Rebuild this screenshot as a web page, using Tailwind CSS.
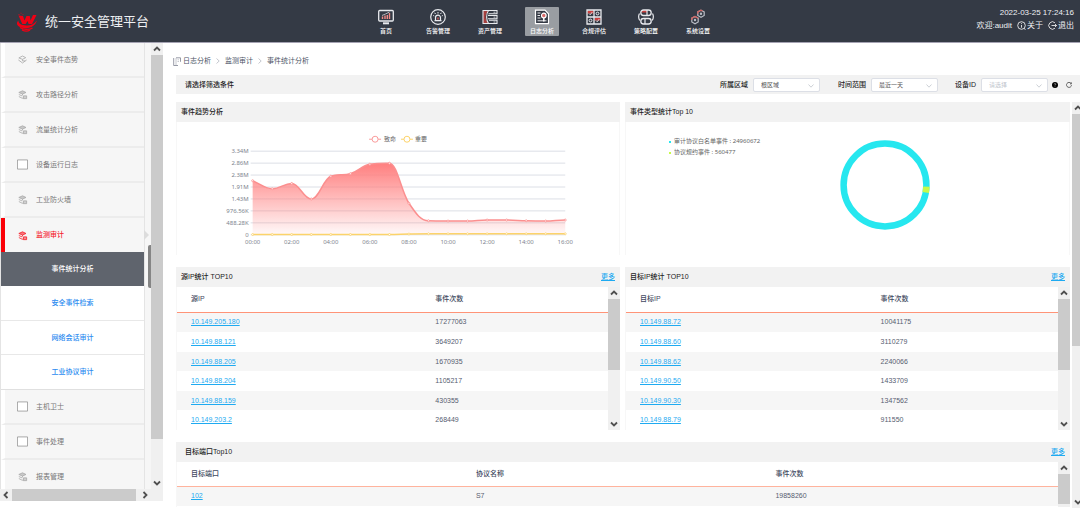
<!DOCTYPE html>
<html lang="zh-CN">
<head>
  <meta charset="UTF-8">
  <meta name="viewport" content="width=device-width, initial-scale=1.0">
  <title>统一安全管理平台</title>
  <script src="https://cdn.jsdelivr.net/npm/@tailwindcss/browser@4"></script>
  <style>
    body { font-family: 'Liberation Sans', 'Noto Sans CJK SC', sans-serif; }
    .chart { font-family: 'Noto Sans', 'Noto Sans CJK SC', sans-serif; }
  </style>
</head>
<body class="bg-white text-[7px] leading-[10px] text-[#333]">

<!-- icon sprite -->
<svg class="hidden">
  <symbol id="up" viewBox="0 0 12 12"><path d="M3 7.5 6 4.5 9 7.5" fill="none" stroke="#505050" stroke-width="1.8"/></symbol>
  <symbol id="down" viewBox="0 0 12 12"><path d="M3 4.5 6 7.5 9 4.5" fill="none" stroke="#505050" stroke-width="1.8"/></symbol>
  <symbol id="left" viewBox="0 0 12 12"><path d="M7.5 3 4.5 6 7.5 9" fill="none" stroke="#505050" stroke-width="1.8"/></symbol>
  <symbol id="right" viewBox="0 0 12 12"><path d="M4.5 3 7.5 6 4.5 9" fill="none" stroke="#505050" stroke-width="1.8"/></symbol>
  <symbol id="chev" viewBox="0 0 8 8"><path d="M1.5 2.5 4 5.2 6.5 2.5" fill="none" stroke="#c0c4cc" stroke-width=".8"/></symbol>
  <symbol id="sep" viewBox="0 0 6 8"><path d="M1.5 1.5 4.2 4 1.5 6.5" fill="none" stroke="#b5b9c2" stroke-width=".8"/></symbol>
  <symbol id="layers" viewBox="0 0 12 12" fill="none" stroke="currentColor" stroke-width=".9">
    <path d="M2 3.800 6 2 9.800 3.800 6 5.500z" fill="currentColor" fill-opacity=".6"/>
    <path d="M2 6 5.500 7.500M2 8.200 5.500 10H7M6 5.500V7"/>
    <path d="M7 7.500h3.500v3H7z" fill="currentColor" fill-opacity=".5"/>
  </symbol>
  <symbol id="cube" viewBox="0 0 12 12" fill="none" stroke="currentColor" stroke-width=".9">
    <path d="M2 4.300 6 2.200 9.500 4 6 5.800zM1.500 6.500 6 9.800 10.500 6.500M6 5.800V7.500H9"/>
  </symbol>
  <symbol id="box" viewBox="0 0 12 12"><path d="M.5 1h11v10H.5z" fill="#fff" stroke="#8c8c8c" stroke-width=".8"/></symbol>
</svg>

<div class="flex h-screen flex-col overflow-hidden">
  <header class="grid h-[43px] shrink-0 grid-cols-[1fr_auto_1fr] border-b border-[#a5a3b3] bg-[#343a45] text-white">
    <div class="flex items-center gap-[8px] pt-[2px] pl-[16px]">
      <svg class="h-[20px] w-[21px]" viewBox="0 0 21 20" fill="#f00014">
        <path d="M2.500 3.500 7 4 8.500 8.500 10.500 4h3.300L14.500 8.500 17 3h3.500L16 12h-3.300L11.500 9 9.700 12H6.300z"/>
        <path d="M2.500 8.500C-2 13 4 17.200 12 16c5.300-.8 8.300-4.500 8.800-7.500-2 3.200-6 5.200-10.300 5C5.500 13.200 2 11.800 2.500 8.500z"/>
        <path d="M4 15.500c3 2.500 9.500 2.500 12.500.5M6 18c2.500 1.300 6 1.300 8 0" fill="none" stroke="#f00014" stroke-width="1.200"/>
        <path d="M4.500 1.200h1M6.500 2.700h1M2.500 2.500h1" stroke="#f00014" stroke-width=".8"/>
      </svg>
      <h1 class="text-[13px] leading-[20px] text-[#eef0f3]">统一安全管理平台</h1>
    </div>
    <nav class="flex gap-[18px] pt-[7px] pl-1 text-[6px] leading-[8px] font-medium">
      <a href="#" class="flex h-[29px] w-[34px] flex-col items-center gap-[2px] rounded-[1px] pt-[2px] whitespace-nowrap">
        <svg class="h-[16px] w-[16px]" viewBox="0 0 16 16" fill="none" stroke="#e8eaee">
          <rect x=".7" y="1.500" width="14.600" height="10.500" rx="1" stroke-width="1.300"/><path d="M5 14.300h6" stroke-width="2"/>
          <path d="M4.500 10V7.500M7 10V6.500M9.300 10V6M11.500 10V4" stroke="#f08a86" stroke-width="1.400"/><path d="M4 6.500 7.500 5 11.500 3" stroke-width=".7"/>
        </svg>首页</a>
      <a href="#" class="flex h-[29px] w-[34px] flex-col items-center gap-[2px] rounded-[1px] pt-[2px] whitespace-nowrap">
        <svg class="h-[16px] w-[16px]" viewBox="0 0 16 16" fill="none" stroke="#e8eaee">
          <circle cx="8" cy="8" r="7.300" stroke-width="1.200"/><path d="M5.500 11.500V8.700a2.500 2.500 0 0 1 5 0v2.800M4.500 11.700h7" stroke-width="1.200"/><path d="M8 8.500v2" stroke="#e35a58" stroke-width="1.300"/>
          <path d="M8 3v1.500M4.700 3.800l.8 1.200M11.300 3.800l-.8 1.200M3.200 6.500l1 .5M12.800 6.500l-1 .5"/>
        </svg>告警管理</a>
      <a href="#" class="flex h-[29px] w-[34px] flex-col items-center gap-[2px] rounded-[1px] pt-[2px] whitespace-nowrap">
        <svg class="h-[16px] w-[16px]" viewBox="0 0 16 16" fill="none" stroke="#e8eaee">
          <path d="M1 1.500h5.500C4.500 4 3.500 6 3.500 8s1 4 3 6.500H1z" fill="#a5403f" stroke="none"/>
          <path d="M7 1.500H1v13h6M7 1.500h8v3.200H7.500L6.500 5M6 6.500h9v3.200H6M7 11.300h8v3.200H7M6.500 1.500C4 5 4 11 6.500 14.500" stroke-width="1.100"/>
          <path d="M11.500 3.200h2M11.500 8.100h2M11.500 13h2" stroke-width=".8"/>
        </svg>资产管理</a>
      <a href="#" class="flex h-[29px] w-[34px] flex-col items-center gap-[2px] rounded-[1px] bg-[#999da2] pt-[2px] whitespace-nowrap">
        <svg class="h-[16px] w-[16px]" viewBox="0 0 16 16" fill="none" stroke="#fff">
          <path d="M1.500 1.200h9.500l3.500 3.600v9.800h-13z" fill="#343a45" stroke-width="1.200"/>
          <path d="M3.500 4h3M3.500 6.500h2.500M3.500 9h3M3.500 11.800h9" stroke-width=".9"/>
          <circle cx="9.800" cy="6.500" r="2.300" fill="#d86a69" stroke-width="1.200"/><path d="M9.800 9v3.500" stroke-width="1.500"/>
        </svg>日志分析</a>
      <a href="#" class="flex h-[29px] w-[34px] flex-col items-center gap-[2px] rounded-[1px] pt-[2px] whitespace-nowrap">
        <svg class="h-[16px] w-[16px]" viewBox="0 0 16 16" fill="none" stroke="#e8eaee">
          <path d="M1.500 1.500h6v3h-6zM8.500 8.500h6v3h-6z" fill="#c9403f" stroke="none"/>
          <path d="M1 1h14v14H1zM8 1v14M1 8h14" stroke-width="1.300"/>
          <path d="m3 4.500 1.200 1.200 2-2.500M10 11.500l1.200 1.200 2-2.500"/><circle cx="11.500" cy="4.500" r="1.400"/><circle cx="4.500" cy="11.500" r="1.400"/>
        </svg>合规评估</a>
      <a href="#" class="flex h-[29px] w-[34px] flex-col items-center gap-[2px] rounded-[1px] pt-[2px] whitespace-nowrap">
        <svg class="h-[16px] w-[16px]" viewBox="0 0 16 16" fill="none" stroke="#e8eaee">
          <path d="M5.500 1.200H9V3.500H3.500a2.300 2.300 0 0 1 2-2.300z" fill="#c9403f" stroke="none"/>
          <rect x="2.800" y="1" width="10.400" height="5.500" rx="2.700" stroke-width="1.300"/><rect x="2.800" y="9.500" width="10.400" height="5.500" rx="2.700" stroke-width="1.300"/>
          <path d="M9 1v5.500M7 9.500v5.500M1.500 4.500C.2 7 .2 9 1.800 11.500M14.500 4.500c1.300 2.500 1.300 4.500-.3 7" stroke-width="1.200"/>
        </svg>策略配置</a>
      <a href="#" class="flex h-[29px] w-[34px] flex-col items-center gap-[2px] rounded-[1px] pt-[2px] whitespace-nowrap">
        <svg class="h-[16px] w-[16px]" viewBox="0 0 16 16" fill="none" stroke="#b9bdc5" stroke-width="1.200">
          <path d="m5 7.500 3.200 1.700v3.800L5 14.800 1.800 13V9.200zM11 1.200l3.200 1.700v3.600L11 8.200 7.800 6.500V2.900z"/>
          <path d="M1.800 11V9.200L5 7.500l3.200 1.700M7.800 4.800V2.900L11 1.200l1.500.8" stroke="#d4625f"/><circle cx="5" cy="11" r=".6"/><circle cx="11" cy="4.800" r=".6"/>
        </svg>系统设置</a>
    </nav>
    <div class="flex flex-col items-end gap-[2px] pt-[7px] pr-[6px] text-[8px] leading-[11px] whitespace-nowrap text-[#eef0f3]">
      <time>2022-03-25 17:24:16</time>
      <div class="flex items-center gap-[5px]">
        <span>欢迎:audit</span>
        <a href="#" class="flex items-center gap-px"><svg class="size-[9px]" viewBox="0 0 9 9" fill="none" stroke="#fff" stroke-width=".8"><circle cx="4.500" cy="4.500" r="3.800"/><path d="M4.500 4v2.700M4.500 2.200v.9M7 7.500l1.500 1"/></svg>关于</a>
        <a href="#" class="flex items-center gap-px"><svg class="size-[9px]" viewBox="0 0 9 9" fill="none" stroke="#fff" stroke-width=".8"><path d="M7 1.800a3.700 3.700 0 1 0 0 5.400M3.500 4.500h5M7 3l1.500 1.500L7 6"/></svg>退出</a>
      </div>
    </div>
  </header>

  <div class="flex min-h-0 flex-1">
    <!-- sidebar -->
    <aside class="mb-[7px] flex w-[163px] shrink-0 flex-col overflow-hidden">
      <div class="flex min-h-0 flex-1">
        <div class="relative flex-1 overflow-hidden bg-[#f6f6f6]">
          <ul class="mr-[6px] border-x border-[#e4e4e4] text-[#777]">
            <li><a href="#" class="flex h-[35px] items-center gap-[8px] border-b-2 border-l-4 border-b-[#ececec] border-l-white pl-[12px]"><svg class="size-[11px] text-[#aaa]"><use href="#cube"/></svg>安全事件态势</a></li>
            <li><a href="#" class="flex h-[35px] items-center gap-[8px] border-b-2 border-l-4 border-b-[#ececec] border-l-white pl-[12px]"><svg class="size-[11px] text-[#aaa]"><use href="#layers"/></svg>攻击路径分析</a></li>
            <li><a href="#" class="flex h-[35px] items-center gap-[8px] border-b-2 border-l-4 border-b-[#ececec] border-l-white pl-[12px]"><svg class="size-[11px] text-[#aaa]"><use href="#layers"/></svg>流量统计分析</a></li>
            <li><a href="#" class="flex h-[35px] items-center gap-[8px] border-b-2 border-l-4 border-b-[#ececec] border-l-white pl-[12px]"><svg class="size-[11px]"><use href="#box"/></svg>设备运行日志</a></li>
            <li><a href="#" class="flex h-[35px] items-center gap-[8px] border-b-2 border-l-4 border-b-[#ececec] border-l-white pl-[12px]"><svg class="size-[11px] text-[#aaa]"><use href="#layers"/></svg>工业防火墙</a></li>
            <li>
              <a href="#" class="flex h-[34px] items-center gap-[8px] border-l-4 border-l-[#fb0007] pl-[12px] font-medium text-[#f5222d]"><svg class="size-[11px]"><use href="#layers"/></svg>监测审计</a>
              <ul class="bg-white font-medium text-[#2d8cf0]">
                <li><a href="#" class="flex h-[34px] items-center justify-center bg-[#5f646d] text-white">事件统计分析</a></li>
                <li><a href="#" class="flex h-[35px] items-center justify-center border-b border-[#e8e8e8]">安全事件检索</a></li>
                <li><a href="#" class="flex h-[34px] items-center justify-center border-b border-[#e8e8e8]">网络会话审计</a></li>
                <li><a href="#" class="flex h-[35px] items-center justify-center border-b border-[#e0e0e0]">工业协议审计</a></li>
              </ul>
            </li>
            <li><a href="#" class="flex h-[35px] items-center gap-[8px] border-b-2 border-l-4 border-b-[#ececec] border-l-white pl-[12px]"><svg class="size-[11px]"><use href="#box"/></svg>主机卫士</a></li>
            <li><a href="#" class="flex h-[35px] items-center gap-[8px] border-b-2 border-l-4 border-b-[#ececec] border-l-white pl-[12px]"><svg class="size-[11px]"><use href="#box"/></svg>事件处理</a></li>
            <li><a href="#" class="flex h-[35px] items-center gap-[8px] border-b-2 border-l-4 border-b-[#ececec] border-l-white pl-[12px]"><svg class="size-[11px] text-[#aaa]"><use href="#layers"/></svg>报表管理</a></li>
          </ul>
          <!-- collapse handle over the edge of the menu -->
          <svg class="absolute top-[187px] right-[2px] h-[10px] w-[5px]" viewBox="0 0 5 10"><path d="M0 0 5 5 0 10z" fill="#dcdcdc"/></svg>
          <button aria-label="收起菜单" class="absolute top-[202px] right-0 h-[43px] w-[3px] rounded-l-[2px] bg-[#858585]"></button>
        </div>
        <div class="flex w-[12px] flex-col bg-[#f0f0f0]">
          <svg class="size-[12px]"><use href="#up"/></svg>
          <div class="mb-[38px] flex-1 bg-[#cbcbcb]"></div>
          <svg class="size-[12px]"><use href="#down"/></svg>
        </div>
      </div>
      <div class="flex h-[12px] bg-[#f0f0f0] pr-[12px]">
        <svg class="size-[12px]"><use href="#left"/></svg>
        <div class="mr-[3px] flex-1 bg-[#cbcbcb]"></div>
        <svg class="size-[12px]"><use href="#right"/></svg>
      </div>
    </aside>

    <main class="flex min-w-0 flex-1 flex-col pt-[13px] pl-[13px]">
      <nav class="-ml-[3px] flex h-[10px] items-center text-[#4d5566]">
        <svg class="mr-[2px] h-[9px] w-[8px]" viewBox="0 0 8 9" fill="none" stroke="#7d8290" stroke-width=".8"><path d="M3 .8h4.500v4M.7 1v7.500H5"/><path d="M3 1v7M4.500 2.800H6M4.500 4.500H6" stroke="#b8bac2"/></svg>
        <a href="#">日志分析</a>
        <svg class="mx-[4px] h-[8px] w-[6px]"><use href="#sep"/></svg>
        <a href="#">监测审计</a>
        <svg class="mx-[4px] h-[8px] w-[6px]"><use href="#sep"/></svg>
        <a href="#">事件统计分析</a>
      </nav>

      <form class="mt-[9px] flex h-[19px] shrink-0 items-center bg-[#f2f2f2] pr-[8px] pl-[9px] font-medium text-[#222]">
        <span class="flex-1">请选择筛选条件</span>
        <label for="area" class="mr-[5px]">所属区域</label>
        <span class="relative mr-[18px] flex">
          <select id="area" class="h-[14px] w-[67px] appearance-none rounded-[2px] border border-[#dcdfe6] bg-white pl-[7px] text-[6px] font-normal text-[#555]"><option>根区域</option></select>
          <svg class="pointer-events-none absolute top-[4px] right-[5px] size-[8px]"><use href="#chev"/></svg>
        </span>
        <label for="range" class="mr-[5px]">时间范围</label>
        <span class="relative mr-[17px] flex">
          <select id="range" class="h-[14px] w-[67px] appearance-none rounded-[2px] border border-[#dcdfe6] bg-white pl-[7px] text-[6px] font-normal text-[#555]"><option>最近一天</option></select>
          <svg class="pointer-events-none absolute top-[4px] right-[5px] size-[8px]"><use href="#chev"/></svg>
        </span>
        <label for="device" class="mr-[5px]">设备ID</label>
        <span class="relative mr-[4px] flex">
          <select id="device" class="h-[14px] w-[67px] appearance-none rounded-[2px] border border-[#dcdfe6] bg-white pl-[7px] text-[6px] font-normal text-[#c0c4cc]"><option>请选择</option></select>
          <svg class="pointer-events-none absolute top-[4px] right-[5px] size-[8px]"><use href="#chev"/></svg>
        </span>
        <button type="button" aria-label="帮助" class="mr-[8px]"><svg class="size-[6px]" viewBox="0 0 6 6"><circle cx="3" cy="3" r="3"/><path d="M2.200 2.300c.1-1.100 1.700-.9 1.600 0 0 .5-.8.600-.8 1.200M3 4.200v.6" fill="none" stroke="#fff" stroke-width=".5"/></svg></button>
        <button type="button" aria-label="刷新"><svg class="size-[6px]" viewBox="0 0 6 6" fill="none" stroke="#444" stroke-width=".8"><path d="M5 1.400A2.500 2.500 0 1 0 5.500 3.200M5.400.4v1.500H4"/></svg></button>
      </form>

      <div class="mt-[8px] flex min-h-0 flex-1">
        <div class="min-w-0 flex-1 overflow-hidden">
          <div class="grid grid-cols-[444fr_445fr] gap-x-[5px]">
            <section class="h-[153px] border-x border-[#f7f7f7]">
              <h2 class="-mx-px flex h-[20px] items-center bg-[#f2f2f2] pl-[5px] font-medium text-[#222]">事件趋势分析</h2>
              <svg id="trend" class="chart h-[133px] w-full text-[6px]" viewBox="0 0 444 133">
                <defs><linearGradient id="fade" x1="0" y1="0" x2="0" y2="1"><stop offset="0" stop-color="#ff7f7f"/><stop offset="1" stop-color="#ff8080" stop-opacity=".05"/></linearGradient></defs>
                <g fill="#fff">
                  <path d="M193 17h12" stroke="#f99a9a"/><circle cx="199" cy="17" r="3" stroke="#f99a9a"/>
                  <path d="M225 17h12" stroke="#fcd36a"/><circle cx="231" cy="17" r="3" stroke="#fcd36a"/>
                </g>
                <text x="208" y="19" fill="#666">致命</text>
                <text x="239" y="19" fill="#666">重要</text>
              </svg>
            </section>

            <section class="h-[153px] border-x border-[#f7f7f7]">
              <h2 class="-mx-px flex h-[20px] items-center bg-[#f2f2f2] pl-[5px] font-medium text-[#222]">事件类型统计Top 10</h2>
              <div class="chart flex justify-between pr-[138px] pl-[43px] text-[6px] leading-[11px] text-[#666]">
                <ul class="pt-[14px]">
                  <li class="flex items-center gap-[3px]"><i class="size-[2px] bg-[#26e7ef]"></i>审计协议白名单事件 : 24960672</li>
                  <li class="flex items-center gap-[3px]"><i class="size-[2px] bg-[#c6f94a]"></i>协议规约事件 : 560477</li>
                </ul>
                <svg class="mt-[17px] size-[92px]" viewBox="0 0 92 92" fill="none" stroke-width="6.500">
                  <circle cx="46" cy="46" r="41.400" stroke="#26e7ef"/>
                  <path d="M87.400 47.700A41.400 41.400 0 0 1 86.700 53.500" stroke="#c6f94a"/>
                </svg>
              </div>
            </section>

            <section class="mt-[12px] border-l border-[#f7f7f7]">
              <h2 class="-ml-px flex h-[20px] items-center justify-between bg-[#f2f2f2] pr-[5px] pl-[5px] font-medium text-[#222]">源IP统计 TOP10 <a href="#" class="text-[#1eaaf1] underline">更多</a></h2>
              <div class="flex">
                <table class="h-[143px] flex-1 table-fixed text-left text-[#565d70]">
                  <thead><tr class="h-[25px] border-b border-[#ff9478] text-[#414960]"><th class="w-[56%] pl-[14px] font-medium">源IP</th><th class="pl-[17px] font-medium">事件次数</th></tr></thead>
                  <tbody data-rows="src"></tbody>
                </table>
                <div class="flex w-[12px] flex-col bg-[#f0f0f0]">
                  <svg class="size-[12px]"><use href="#up"/></svg>
                  <div class="h-[71px] bg-[#cbcbcb]"></div>
                  <svg class="mt-auto size-[12px]"><use href="#down"/></svg>
                </div>
              </div>
            </section>

            <section class="mt-[12px] border-l border-[#f7f7f7]">
              <h2 class="-ml-px flex h-[20px] items-center justify-between bg-[#f2f2f2] pr-[5px] pl-[5px] font-medium text-[#222]">目标IP统计 TOP10 <a href="#" class="text-[#1eaaf1] underline">更多</a></h2>
              <div class="flex">
                <table class="h-[143px] flex-1 table-fixed text-left text-[#565d70]">
                  <thead><tr class="h-[25px] border-b border-[#ff9478] text-[#414960]"><th class="w-[55%] pl-[14px] font-medium">目标IP</th><th class="pl-[17px] font-medium">事件次数</th></tr></thead>
                  <tbody data-rows="dst"></tbody>
                </table>
                <div class="flex w-[12px] flex-col bg-[#f0f0f0]">
                  <svg class="size-[12px]"><use href="#up"/></svg>
                  <div class="h-[71px] bg-[#cbcbcb]"></div>
                  <svg class="mt-auto size-[12px]"><use href="#down"/></svg>
                </div>
              </div>
            </section>

            <section class="col-span-2 mt-[12px] border-l border-[#f7f7f7]">
              <h2 class="-ml-px flex h-[20px] items-center justify-between bg-[#f2f2f2] pr-[5px] pl-[9px] font-medium text-[#222]">目标端口Top10 <a href="#" class="text-[#1eaaf1] underline">更多</a></h2>
              <div class="flex h-[45px]">
                <table class="h-[44px] flex-1 table-fixed text-left text-[#565d70]">
                  <thead><tr class="h-[24px] border-b border-[#ffb39d] text-[#414960]"><th class="w-[32%] pl-[14px] font-medium">目标端口</th><th class="w-[34%] pl-[17px] font-medium">协议名称</th><th class="pl-[17px] font-medium">事件次数</th></tr></thead>
                  <tbody><tr class="bg-[#f6f6f6]"><td class="pl-[14px]"><a href="#" class="text-[#1eaaf1] underline">102</a></td><td class="pl-[17px]">S7</td><td class="pl-[17px]">19858260</td></tr></tbody>
                </table>
                <div class="flex w-[12px] flex-col bg-[#f0f0f0]">
                  <svg class="size-[12px]"><use href="#up"/></svg>
                  <div class="h-[30px] bg-[#cbcbcb]"></div>
                </div>
              </div>
            </section>
          </div>
        </div>
        <!-- page scrollbar, cut by the window edge -->
        <div class="ml-[2px] flex w-[8px] flex-col overflow-hidden bg-[#f0f0f0]">
          <svg class="size-[12px] shrink-0"><use href="#up"/></svg>
          <div class="h-[232px] bg-[#cbcbcb]"></div>
          <svg class="mt-auto size-[12px] shrink-0"><use href="#down"/></svg>
        </div>
      </div>
    </main>
  </div>
</div>

<script>
const tables = {
  src: [['10.149.205.180', 17277063], ['10.149.88.121', 3649207], ['10.149.88.205', 1670935], ['10.149.88.204', 1105217], ['10.149.88.159', 430355], ['10.149.203.2', 268449]],
  dst: [['10.149.88.72', 10041175], ['10.149.88.60', 3110279], ['10.149.88.62', 2240066], ['10.149.90.50', 1433709], ['10.149.90.30', 1347562], ['10.149.88.79', 911550]]
};
document.querySelectorAll('[data-rows]').forEach(body => {
  body.innerHTML = tables[body.dataset.rows].map(([ip, n]) => `
    <tr class="odd:bg-[#f6f6f6]"><td class="pl-[14px]"><a href="#" class="text-[#1eaaf1] underline">${ip}</a></td><td class="pl-[17px]">${n}</td></tr>`).join('');
});

// trend chart, values in millions
const fatal = [2.16, 1.84, 2.05, 1.43, 2.34, 2.44, 2.82, 2.86, 1.26, 0.56, 0.55, 0.55, 0.59, 0.59, 0.56, 0.55, 0.59];
const major = [.01, .01, .01, .01, .01, .01, .01, .01, .03, .04, .04, .04, .04, .04, .04, .04, .04];
const left = 76, right = 390, top0 = 29, base = 113;
const X = i => left + i * (right - left) / 16;
const Y = v => base - v / 3.34 * (base - top0);

function smooth(values) {
  const p = values.map((v, i) => [X(i), Y(v)]);
  const m = p.map((q, i) => {
    if (i === 0 || i === p.length - 1) return 0;
    const a = q[1] - p[i - 1][1], b = p[i + 1][1] - q[1];
    return a * b < 0 ? 0 : (a + b) / 2;
  });
  // keep the knee at 09:00 and the shoulder at 04:00 from overshooting
  m.forEach((s, i) => {
    if (i === 0 || i === p.length - 1) return;
    const lim = 3 * Math.min(Math.abs(p[i][1] - p[i - 1][1]), Math.abs(p[i + 1][1] - p[i][1]));
    m[i] = Math.sign(s) * Math.min(Math.abs(s), lim);
  });
  m[0] = p[1][1] - p[0][1];
  const dx = (X(1) - X(0)) * 0.4;
  let d = `M${p[0]}`;
  for (let i = 1; i < p.length; i++) {
    d += `C${p[i - 1][0] + dx},${p[i - 1][1] + m[i - 1] * 0.4} ${p[i][0] - dx},${p[i][1] - m[i] * 0.4} ${p[i]}`;
  }
  return d;
}

let out = '';
['0', '488.28K', '976.56K', '1.43M', '1.91M', '2.38M', '2.86M', '3.34M'].forEach((t, i) => {
  const y = base - i * (base - top0) / 7;
  out += `<path d="M${left - 2} ${y}H${right}" stroke="#dcdfe6" stroke-width="1"/><text x="${left - 4}" y="${y + 2}" text-anchor="end" fill="#7d838e">${t}</text>`;
});
for (let h = 0; h <= 16; h += 2) {
  out += `<text x="${X(h)}" y="122" text-anchor="middle" fill="#7d838e">${String(h).padStart(2, '0')}:00</text>`;
}
const line = smooth(fatal);
out += `<path d="${line}V${base}H${left}Z" fill="url(#fade)"/><path d="${line}" fill="none" stroke="#fb8f8f" stroke-width="1.500"/>`;
out += `<path d="${smooth(major)}" fill="none" stroke="#fcd36a" stroke-width="1.500"/>`;
fatal.forEach((v, i) => out += `<circle cx="${X(i)}" cy="${Y(v)}" r="1" fill="#fff" stroke="#fb8f8f" stroke-width=".8"/>`);
major.forEach((v, i) => out += `<circle cx="${X(i)}" cy="${Y(v)}" r="1" fill="#fff" stroke="#fcd36a" stroke-width=".8"/>`);
document.getElementById('trend').insertAdjacentHTML('beforeend', out);
</script>
</body>
</html>
